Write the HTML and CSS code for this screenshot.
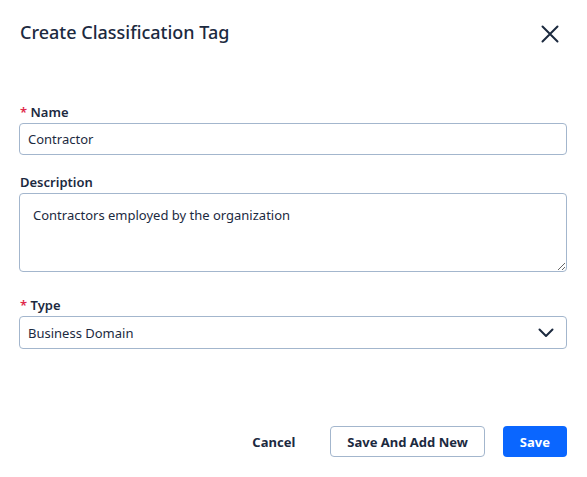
FILE: index.html
```html
<!DOCTYPE html>
<html lang="en">
<head>
    <meta charset="UTF-8">
    <meta name="viewport" content="width=device-width, initial-scale=1.0">
    <title>Create Classification Tag</title>
    <link rel="stylesheet" href="styles.css">
</head>
<body>
    <div class="modal">
        <div class="modal-header">
            <h1 class="modal-title">Create Classification Tag</h1>
            <button class="close-btn" aria-label="Close">
                <svg width="18" height="18" viewBox="0 0 18 18">
                    <path d="M1.5 1.5 L16.5 16.5 M16.5 1.5 L1.5 16.5" stroke="#1c2a3f" stroke-width="2" stroke-linecap="round" fill="none"/>
                </svg>
            </button>
        </div>

        <form class="form">
            <div class="field field-name">
                <label class="label"><span class="req">*</span> Name</label>
                <input class="input" type="text" value="Contractor">
            </div>
            <div class="field field-desc">
                <label class="label">Description</label>
                <textarea class="textarea">Contractors employed by the organization</textarea>
            </div>
            <div class="field field-type">
                <label class="label"><span class="req">*</span> Type</label>
                <div class="select">
                    <span>Business Domain</span>
                    <svg width="16" height="10" viewBox="0 0 16 10">
                        <path d="M1.5 1.5 L8 8 L14.5 1.5" stroke="#1c2a3f" stroke-width="2" stroke-linecap="round" stroke-linejoin="round" fill="none"/>
                    </svg>
                </div>
            </div>
        </form>

        <div class="modal-footer">
            <button class="btn btn-text">Cancel</button>
            <button class="btn btn-outline">Save And Add New</button>
            <button class="btn btn-primary">Save</button>
        </div>
    </div>
</body>
</html>
```

FILE: styles.css
```css
* { box-sizing: border-box; }
body {
    margin: 0;
    background: #fff;
    font-family: "Noto Sans", "Open Sans", sans-serif;
    color: #1c2a3f;
}
.modal {
    width: 587px;
    height: 477px;
    padding: 20px 20px 0 20px;
}
.modal-header {
    display: flex;
    justify-content: space-between;
    align-items: flex-start;
}
.modal-title {
    margin: 0;
    font-size: 18px;
    line-height: 24px;
    font-weight: 500;
    color: #1c2a3f;
}
.close-btn {
    border: none;
    background: none;
    padding: 0;
    margin: 5px 8px 0 0;
    cursor: pointer;
    line-height: 0;
}
.form { margin-top: 58px; }
.field-desc { margin-top: 17px; }
.field-type { margin-top: 23px; }
.label {
    display: block;
    font-size: 13px;
    line-height: 20px;
    font-weight: 600;
    margin-bottom: 1px;
}
.req { color: #e0284b; }
.input, .textarea, .select {
    display: block;
    width: 548px;
    margin-left: -1px;
    border: 1px solid #a3b6cd;
    border-radius: 4px;
    font-family: inherit;
    font-size: 13px;
    color: #1c2a3f;
    background: #fff;
}
.input {
    height: 32px;
    padding: 0 8px;
}
.textarea {
    height: 79px;
    padding: 11px 13px 7px;
    line-height: 20px;
    resize: vertical;
}
.select {
    height: 33px;
    padding: 0 12px 0 8px;
    display: flex;
    align-items: center;
    justify-content: space-between;
}
.modal-footer {
    display: flex;
    justify-content: flex-end;
    gap: 18px;
    margin-top: 77px;
}
.btn {
    height: 31px;
    padding: 0 16px;
    border-radius: 4px;
    font-family: inherit;
    font-size: 13px;
    font-weight: 700;
    cursor: pointer;
    border: 1px solid transparent;
}
.btn-text { background: none; color: #1c2a3f; }
.btn-outline { background: #fff; border-color: #a3b6cd; color: #1c2a3f; }
.btn-primary { background: #0a66ff; color: #fff; }
```
